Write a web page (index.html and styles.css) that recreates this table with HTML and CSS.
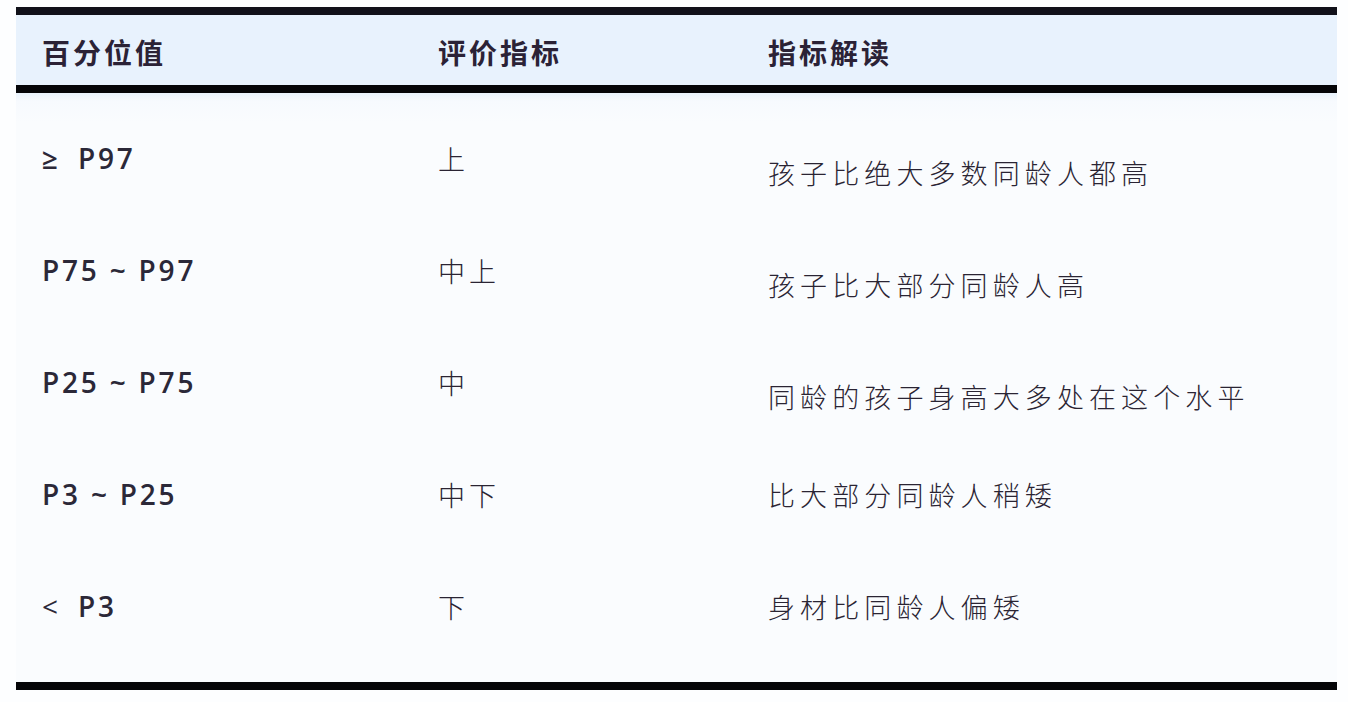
FILE: index.html
```html
<!DOCTYPE html>
<html lang="zh-CN">
<head>
<meta charset="utf-8">
<title>百分位值</title>
<link rel="stylesheet" href="styles.css">
</head>
<body>
<div class="frame">
  <div class="table">
    <div class="head">
      <div class="cell c1">百分位值</div>
      <div class="cell c2">评价指标</div>
      <div class="cell c3">指标解读</div>
    </div>
    <div class="body">
      <div class="row">
        <div class="cell c1 num"><span class="sym">≥</span> P97</div>
        <div class="cell c2 cn">上</div>
        <div class="cell c3 cn low">孩子比绝大多数同龄人都高</div>
      </div>
      <div class="row">
        <div class="cell c1 num">P75 ~ P97</div>
        <div class="cell c2 cn">中上</div>
        <div class="cell c3 cn low">孩子比大部分同龄人高</div>
      </div>
      <div class="row">
        <div class="cell c1 num">P25 ~ P75</div>
        <div class="cell c2 cn">中</div>
        <div class="cell c3 cn low">同龄的孩子身高大多处在这个水平</div>
      </div>
      <div class="row">
        <div class="cell c1 num">P3 ~ P25</div>
        <div class="cell c2 cn">中下</div>
        <div class="cell c3 cn">比大部分同龄人稍矮</div>
      </div>
      <div class="row">
        <div class="cell c1 num"><span class="sym lt">&lt;</span> P3</div>
        <div class="cell c2 cn">下</div>
        <div class="cell c3 cn">身材比同龄人偏矮</div>
      </div>
    </div>
  </div>
</div>
</body>
</html>
```

FILE: styles.css
```css
html, body {
  margin: 0;
  padding: 0;
  background: #fdfeff;
}

.frame {
  width: 1348px;
  height: 702px;
  box-sizing: border-box;
  padding: 7px 11px 0 16px;
}

.table {
  width: 1321px;
  color: #2a2433;
}

.head,
.row {
  display: grid;
  grid-template-columns: 396px 330px 1fr;
  align-items: center;
}

.head {
  height: 70px;
  border-top: 8px solid #11111a;
  border-bottom: 8px solid #050508;
  background: #e8f2fd;
  font-family: "Noto Sans CJK SC", "Noto Sans", sans-serif;
  font-weight: 700;
  font-size: 28px;
  letter-spacing: 3px;
  color: #2b2236;
}

.head .cell {
  padding-top: 4px;
}

.cell {
  padding-left: 26px;
  white-space: nowrap;
}

.body {
  background: linear-gradient(#e9f3fd 0px, #f7fafe 8px, #fafcfe 30px);
  padding: 9px 0 20px;
  border-bottom: 8px solid #050508;
}

.row {
  height: 112px;
}

.num {
  font-family: "Open Sans", "Noto Sans", sans-serif;
  font-weight: 600;
  font-size: 28px;
  letter-spacing: 2.8px;
  color: #2b2838;
}

.sym {
  margin-right: 7px;
}

.lt {
  font-weight: 400;
}

.cn {
  font-family: "Noto Sans CJK SC", sans-serif;
  font-weight: 300;
  font-size: 27px;
  color: #2a2433;
}

.c2.cn {
  letter-spacing: 4px;
}

.c3.cn {
  letter-spacing: 5.1px;
}

.low {
  padding-top: 28px;
}
```
